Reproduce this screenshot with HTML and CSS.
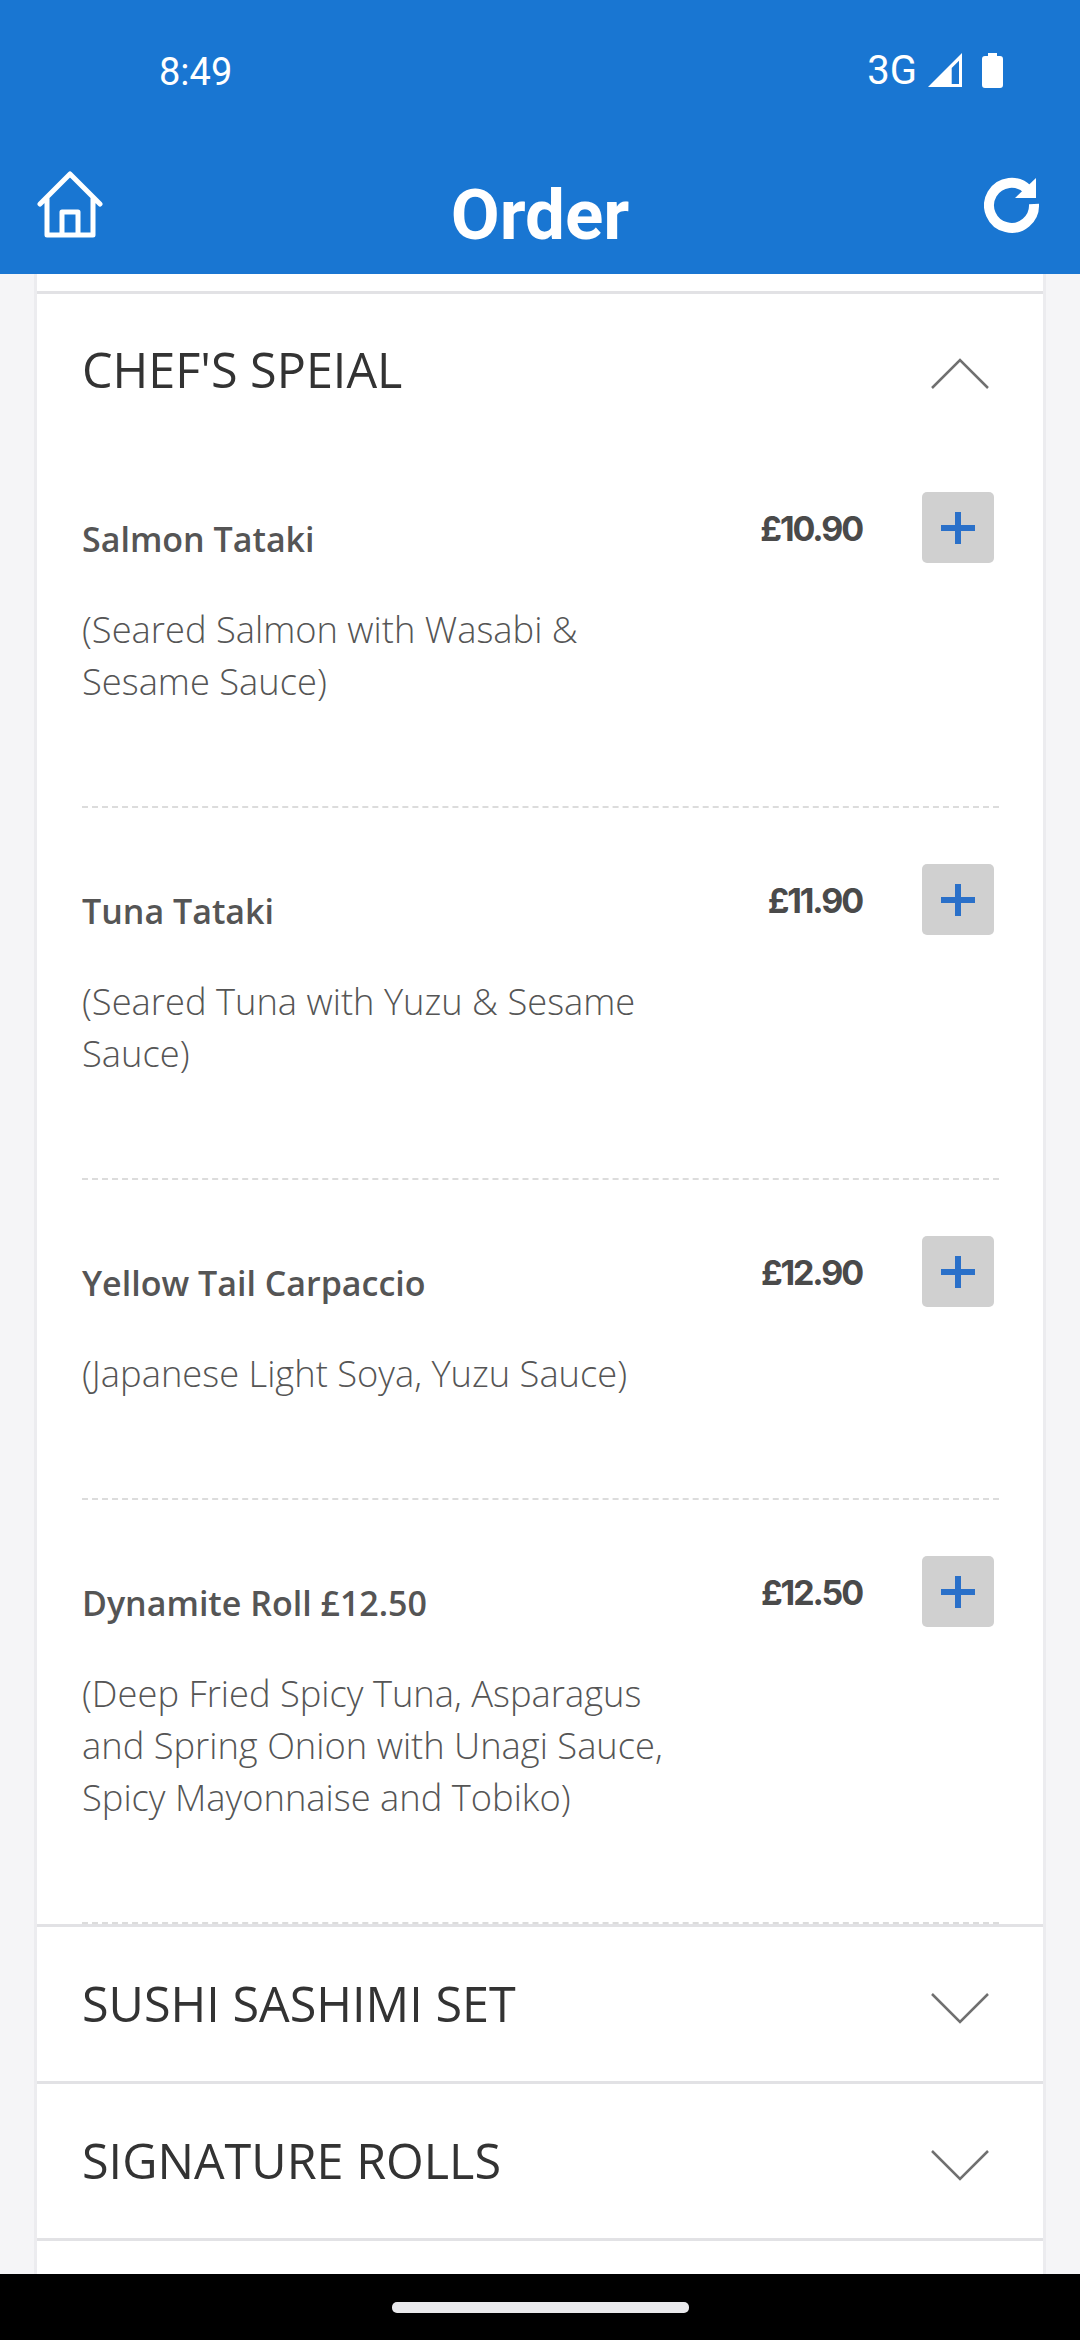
FILE: index.html
```html
<!DOCTYPE html>
<html lang="en">
<head>
<meta charset="utf-8">
<title>Order</title>
<link rel="stylesheet" href="styles.css">
</head>
<body>
<div class="screen">
  <header class="appbar">
    <div class="status">
      <span class="time">8:49</span>
      <div class="status-right">
        <span class="net">3G</span>
        <svg class="status-icons" viewBox="0 0 80 40" width="80" height="40">
          <path fill="#fff" fill-rule="evenodd" d="M1 35 L35 1 V35 Z M24.700 32 H32 V8.700 L24.700 16 Z"/>
          <path fill="#fff" d="M61 1 H70 V4 H73 Q76 4 76 7 V33 Q76 36 73 36 H58 Q55 36 55 33 V7 Q55 4 58 4 H61 Z"/>
        </svg>
      </div>
    </div>
    <div class="titlebar">
      <svg class="icon-home" viewBox="0 0 68 70" width="68" height="70">
        <path fill="none" stroke="#fff" stroke-width="5" stroke-linecap="round" stroke-linejoin="round" d="M4 33 L34 3 L64 33 M11 27 V64 H57 V27 M26 64 V41 H42 V64"/>
      </svg>
      <h1 class="title">Order</h1>
      <svg class="icon-refresh" viewBox="0 0 60 60" width="60" height="60">
        <path fill="none" stroke="#fff" stroke-width="10" d="M44 13 A22.500 22.500 0 1 0 50 27"/>
        <path fill="#fff" d="M31 21 L52 1 V21 Z"/>
      </svg>
    </div>
  </header>

  <main class="content">
    <div class="accordion">
      <div class="section stub"></div>

      <section class="section open">
        <div class="section-head first">
          <h2 class="section-title">CHEF'S SPEIAL</h2>
          <svg class="chevron" viewBox="0 0 58 30" width="58" height="30"><path d="M1 29 L29 1 L57 29"/></svg>
        </div>

        <article class="item">
          <div class="item-text">
            <h3 class="item-name">Salmon Tataki</h3>
            <p class="item-desc">(Seared Salmon with Wasabi &amp; Sesame Sauce)</p>
          </div>
          <div class="item-buy">
            <span class="price">£10.90</span>
            <button class="add" type="button"><svg viewBox="0 0 34 32" width="34" height="32"><path d="M0 13 H34 V19 H0 Z M14 0 H20 V32 H14 Z"/></svg></button>
          </div>
        </article>

        <article class="item">
          <div class="item-text">
            <h3 class="item-name">Tuna Tataki</h3>
            <p class="item-desc">(Seared Tuna with Yuzu &amp; Sesame Sauce)</p>
          </div>
          <div class="item-buy">
            <span class="price">£11.90</span>
            <button class="add" type="button"><svg viewBox="0 0 34 32" width="34" height="32"><path d="M0 13 H34 V19 H0 Z M14 0 H20 V32 H14 Z"/></svg></button>
          </div>
        </article>

        <article class="item">
          <div class="item-text">
            <h3 class="item-name">Yellow Tail Carpaccio</h3>
            <p class="item-desc">(Japanese Light Soya, Yuzu Sauce)</p>
          </div>
          <div class="item-buy">
            <span class="price">£12.90</span>
            <button class="add" type="button"><svg viewBox="0 0 34 32" width="34" height="32"><path d="M0 13 H34 V19 H0 Z M14 0 H20 V32 H14 Z"/></svg></button>
          </div>
        </article>

        <article class="item">
          <div class="item-text">
            <h3 class="item-name">Dynamite Roll £12.50</h3>
            <p class="item-desc">(Deep Fried Spicy Tuna, Asparagus and Spring Onion with Unagi Sauce, Spicy Mayonnaise and Tobiko)</p>
          </div>
          <div class="item-buy">
            <span class="price">£12.50</span>
            <button class="add" type="button"><svg viewBox="0 0 34 32" width="34" height="32"><path d="M0 13 H34 V19 H0 Z M14 0 H20 V32 H14 Z"/></svg></button>
          </div>
        </article>
      </section>

      <section class="section">
        <div class="section-head">
          <h2 class="section-title">SUSHI SASHIMI SET</h2>
          <svg class="chevron" viewBox="0 0 58 30" width="58" height="30"><path d="M1 1 L29 29 L57 1"/></svg>
        </div>
      </section>

      <section class="section">
        <div class="section-head">
          <h2 class="section-title">SIGNATURE ROLLS</h2>
          <svg class="chevron" viewBox="0 0 58 30" width="58" height="30"><path d="M1 1 L29 29 L57 1"/></svg>
        </div>
      </section>
    </div>
  </main>

  <nav class="navbar"><span class="pill"></span></nav>
</div>
</body>
</html>
```
FILE: styles.css
```css
* { box-sizing: border-box; }
html, body { margin: 0; padding: 0; }
body { background: #f5f5f7; font-family: "Open Sans", sans-serif; }

.screen { width: 1080px; height: 2340px; display: flex; flex-direction: column; overflow: hidden; }

.appbar { height: 274px; flex: none; background: #1976d2; color: #fff; display: flex; flex-direction: column; }
.status { height: 144px; display: flex; justify-content: space-between; align-items: center; padding: 0 73px 0 159px; font-family: Roboto, sans-serif; font-size: 38px; }
.status-right { display: flex; align-items: center; gap: 10px; }
.net { font-size: 40px; margin-bottom: 3px; }
.status-icons { display: block; }
.titlebar { flex: 1; display: flex; align-items: flex-start; justify-content: space-between; padding: 0 36px; }
.icon-home { margin-top: 27px; }
.icon-refresh { margin-top: 33px; }
.title { margin: 29px 0 0; font: 700 71px/84px Roboto, sans-serif; padding-right: 8px; }

.content { flex: 1; min-height: 0; overflow: hidden; padding: 0 34px; }
.accordion { background: #fff; border-left: 3px solid #ececef; border-right: 3px solid #ececef; min-height: 100%; }
.section { border-bottom: 3px solid #e2e2e5; }
.stub { height: 20px; }

.section-head { height: 154px; display: flex; align-items: center; justify-content: space-between; padding: 0 54px 0 45px; }
.section-head.first { height: 142px; padding-top: 10px; }
.section-title { margin: 0 0 2px; font: 400 48.500px/60px "Open Sans", sans-serif; color: #333; }
.chevron { margin-top: 8px; overflow: visible; flex: none; }
.chevron path { fill: none; stroke: #707070; stroke-width: 2.500; }

.item { display: flex; justify-content: space-between; margin: 0 44px 0 45px; padding: 56px 5px 99px 0; border-bottom: 2px dashed #dcdcdc; }
.item-text { width: 600px; }
.item-name { margin: 23px 0 40px; font: 600 34px/48px "Open Sans", sans-serif; color: #555; }
.item-desc { margin: 0; font: 300 36.300px/52px "Open Sans", sans-serif; color: #555; }
.item-buy { display: flex; align-items: flex-start; gap: 60px; }
.price { font: 700 34px/73px Inter, sans-serif; color: #4a4a4a; letter-spacing: -2.100px; }
.add { width: 72px; height: 71px; padding: 0; border: 0; border-radius: 5px; background: #d0d0d0; display: flex; align-items: center; justify-content: center; }
.add svg { fill: #2a70c9; display: block; }

.navbar { height: 66px; flex: none; background: #000; display: flex; justify-content: center; padding-top: 28px; }
.pill { width: 297px; height: 11px; border-radius: 5px; background: #e9e9ec; }
```
